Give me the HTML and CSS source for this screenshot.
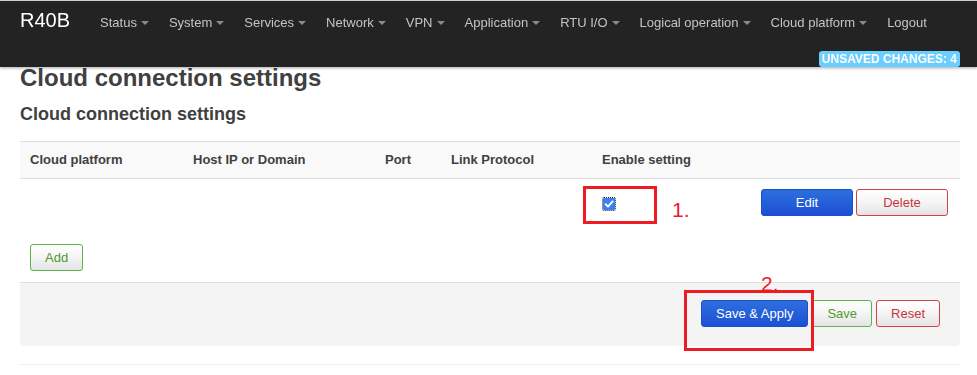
FILE: index.html
```html
<!DOCTYPE html>
<html lang="en">
<head>
<meta charset="utf-8">
<title>Cloud connection settings</title>
<link rel="stylesheet" href="styles.css">
</head>
<body>
<header class="navbar">
  <a class="brand" href="#">R40B</a>
  <ul class="nav">
    <li><a href="#">Status<span class="caret"></span></a></li>
    <li><a href="#">System<span class="caret"></span></a></li>
    <li><a href="#">Services<span class="caret"></span></a></li>
    <li><a href="#">Network<span class="caret"></span></a></li>
    <li><a href="#">VPN<span class="caret"></span></a></li>
    <li><a href="#">Application<span class="caret"></span></a></li>
    <li><a href="#">RTU I/O<span class="caret"></span></a></li>
    <li><a href="#">Logical operation<span class="caret"></span></a></li>
    <li><a href="#">Cloud platform<span class="caret"></span></a></li>
    <li><a href="#">Logout</a></li>
  </ul>
  <span class="badge">UNSAVED CHANGES: 4</span>
</header>

<main class="main">
  <h2 class="title">Cloud connection settings</h2>
  <h3 class="subtitle">Cloud connection settings</h3>

  <table class="table">
    <colgroup>
      <col class="c1"><col class="c2"><col class="c3"><col class="c4"><col class="c5"><col class="c6">
    </colgroup>
    <thead>
      <tr>
        <th>Cloud platform</th>
        <th>Host IP or Domain</th>
        <th>Port</th>
        <th>Link Protocol</th>
        <th>Enable setting</th>
        <th></th>
      </tr>
    </thead>
    <tbody>
      <tr>
        <td></td>
        <td></td>
        <td></td>
        <td></td>
        <td><span class="checkbox" role="checkbox" aria-checked="true"><svg width="12" height="12" viewBox="0 0 12 12"><polyline points="2.6,6.2 5,8.6 9.6,3.4" fill="none" stroke="#fff" stroke-width="1.9" stroke-linecap="round" stroke-linejoin="round"/></svg></span></td>
        <td class="cell-actions">
          <div class="row-actions">
            <button class="btn btn-blue btn-wide">Edit</button>
            <button class="btn btn-red btn-wide">Delete</button>
          </div>
        </td>
      </tr>
    </tbody>
  </table>

  <div class="add-row"><button class="btn btn-green">Add</button></div>

  <div class="actions">
    <button class="btn btn-blue">Save &amp; Apply</button>
    <button class="btn btn-green">Save</button>
    <button class="btn btn-red">Reset</button>
  </div>

  <div class="footer-line"></div>
</main>

<span class="mark-num num-1">1.</span>
<div class="mark mark-1"></div>
<span class="mark-num num-2">2.</span>
<div class="mark mark-2"></div>
</body>
</html>
```

FILE: styles.css
```css
html, body {
  margin: 0;
  padding: 0;
}
body {
  position: relative;
  font-family: "Liberation Sans", Arial, sans-serif;
  color: #404040;
  background: #fff;
  width: 977px;
  height: 375px;
  overflow: hidden;
}

/* navbar */
.navbar {
  position: fixed;
  top: 0;
  left: 0;
  right: 0;
  height: 67px;
  box-sizing: border-box;
  border-top: 1px solid #cfcfcf;
  background: #232323;
  box-shadow: 0 1px 3px rgba(0, 0, 0, 0.35);
  display: flex;
  align-items: baseline;
  padding-top: 9px;
  z-index: 10;
}
.brand {
  padding: 0 20px;
  font-size: 20px;
  line-height: 20px;
  color: #fff;
  text-decoration: none;
}
.nav {
  display: flex;
  align-items: baseline;
  list-style: none;
  margin: 0;
  padding: 0;
}
.nav a {
  display: block;
  padding: 0 10px;
  font-size: 13px;
  line-height: 15px;
  color: #c4c4c4;
  text-decoration: none;
}
.caret {
  display: inline-block;
  width: 0;
  height: 0;
  margin-left: 4px;
  vertical-align: middle;
  border-top: 4px solid #8a8a8a;
  border-left: 4px solid transparent;
  border-right: 4px solid transparent;
  position: relative;
  top: -1px;
}
.badge {
  position: absolute;
  right: 17px;
  bottom: 0;
  height: 16px;
  line-height: 16px;
  padding: 0 3px;
  font-size: 12px;
  font-weight: bold;
  color: #fff;
  background: #6ccdff;
  border-radius: 3px;
}

/* main */
.main {
  padding: 65px 17px 0 20px;
}
.title {
  margin: 0;
  font-size: 24px;
  line-height: 26px;
  font-weight: bold;
  color: #404040;
}
.subtitle {
  margin: 13px 0 0;
  font-size: 18px;
  line-height: 20px;
  font-weight: bold;
  color: #404040;
}

.table {
  margin-top: 17px;
  width: 100%;
  border-collapse: collapse;
  table-layout: fixed;
}
.c1 { width: 163px; }
.c2 { width: 192px; }
.c3 { width: 66px; }
.c4 { width: 151px; }
.c5 { width: 159px; }
.table th {
  text-align: left;
  padding: 10px 10px 11px;
  font-size: 13px;
  line-height: 15px;
  font-weight: bold;
  color: #404040;
  background: #f9f9f9;
  border-top: 1px solid #dddddd;
  border-bottom: 1px solid #dddddd;
}
.table td {
  padding: 10px;
  vertical-align: middle;
  font-size: 13px;
}
.table td.cell-actions {
  padding-right: 12px;
}
.row-actions {
  display: flex;
  justify-content: flex-end;
  gap: 3px;
}

.checkbox {
  display: block;
  width: 12px;
  height: 12px;
  margin-left: 1px;
  margin-top: 2px;
  background: #3a7ff3;
  border-radius: 1px;
  outline: 1px dotted #222;
  outline-offset: 0;
}
.checkbox svg {
  display: block;
}

/* buttons */
.btn {
  display: inline-block;
  box-sizing: border-box;
  height: 27px;
  padding: 0 14px;
  font-family: "Liberation Sans", Arial, sans-serif;
  font-size: 13px;
  line-height: 25px;
  border: 1px solid #ccc;
  border-radius: 3px;
  background: linear-gradient(to bottom, #ffffff 0%, #f6f6f6 45%, #e4e4e4 100%);
  cursor: pointer;
}
.btn-wide {
  width: 92px;
  padding: 0;
}
.btn-blue {
  color: #fff;
  border-color: #1c4fc4;
  background: linear-gradient(to bottom, #2d6fdd 0%, #1d4fd5 100%);
}
.btn-red {
  color: #c8353f;
  border-color: #d0434a;
}
.btn-green {
  color: #4f9b2c;
  border-color: #5cb646;
}

.add-row {
  margin-top: 18px;
  padding-left: 10px;
}
.actions {
  margin-top: 11px;
  display: flex;
  justify-content: flex-end;
  gap: 4px;
  padding: 17px 20px 19px;
  background: #f4f4f4;
  border-top: 1px solid #dddddd;
  border-radius: 0 0 4px 4px;
}
.footer-line {
  margin-top: 18px;
  border-top: 1px solid #eeeeee;
}

/* annotations drawn over the page */
.mark {
  position: absolute;
  box-sizing: border-box;
  border: 3px solid #ed1c24;
  z-index: 5;
}
.mark-1 {
  left: 583px;
  top: 186px;
  width: 74px;
  height: 38px;
}
.mark-2 {
  left: 684px;
  top: 290px;
  width: 130px;
  height: 61px;
}
.mark-num {
  position: absolute;
  font-family: "Liberation Sans", Arial, sans-serif;
  font-size: 21px;
  line-height: 21px;
  color: #ed1c24;
  z-index: 4;
}
.num-1 {
  left: 672px;
  top: 199px;
}
.num-2 {
  left: 761px;
  top: 273px;
}
```
